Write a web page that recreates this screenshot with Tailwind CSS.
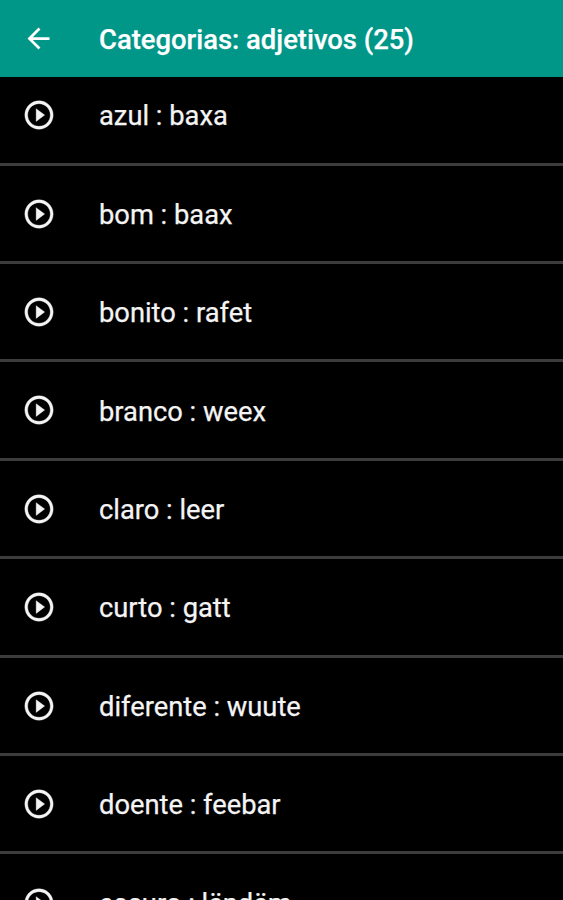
<!DOCTYPE html>
<html lang="pt">
<head>
<meta charset="utf-8">
<title>Categorias: adjetivos (25)</title>
<script src="https://cdn.jsdelivr.net/npm/@tailwindcss/browser@4"></script>
</head>
<body class="bg-black">
<svg class="hidden"><symbol id="play" viewBox="0 0 24 24"><path fill="currentColor" stroke="currentColor" stroke-width=".25" d="M10 16.500l6-4.500-6-4.500v9zM12 2C6.480 2 2 6.480 2 12s4.480 10 10 10 10-4.480 10-10S17.520 2 12 2zm0 18c-4.410 0-8-3.590-8-8s3.590-8 8-8 8 3.590 8 8-3.590 8-8 8z"/></symbol></svg>
<main class="flex h-[900px] w-[563px] flex-col overflow-hidden bg-black font-[Roboto,sans-serif] text-[27.300px] text-[#f4f4f4] [-webkit-text-stroke:0.25px]">
  <header class="relative z-10 flex h-[77.400px] shrink-0 items-center bg-[#009688] pl-[22px] text-white">
    <svg class="size-[33px]" viewBox="0 0 24 24"><path fill="currentColor" d="M20 11H7.830l5.590-5.590L12 4l-8 8 8 8 1.410-1.410L7.830 13H20v-2z"/></svg>
    <h1 class="ml-[44px] pt-[3px] text-[27.400px] font-medium">Categorias: adjetivos (25)</h1>
  </header>
  <ul class="-mt-[10.300px] flex flex-col [&>li]:flex [&>li]:h-[98.430px] [&>li]:shrink-0 [&>li]:items-center [&>li]:border-b-3 [&>li]:border-[#3c3c3c] [&>li]:pl-[22px] [&>li]:pt-[0.800px] [&_svg]:size-[34px] [&_span]:ml-[43px] [&_span]:pt-[3px]">
    <li><svg><use href="#play"/></svg><span>azul : baxa</span></li>
    <li><svg><use href="#play"/></svg><span>bom : baax</span></li>
    <li><svg><use href="#play"/></svg><span>bonito : rafet</span></li>
    <li><svg><use href="#play"/></svg><span>branco : weex</span></li>
    <li><svg><use href="#play"/></svg><span>claro : leer</span></li>
    <li><svg><use href="#play"/></svg><span>curto : gatt</span></li>
    <li><svg><use href="#play"/></svg><span>diferente : wuute</span></li>
    <li><svg><use href="#play"/></svg><span>doente : feebar</span></li>
    <li><svg><use href="#play"/></svg><span>escuro : lëndëm</span></li>
  </ul>
</main>
</body>
</html>
